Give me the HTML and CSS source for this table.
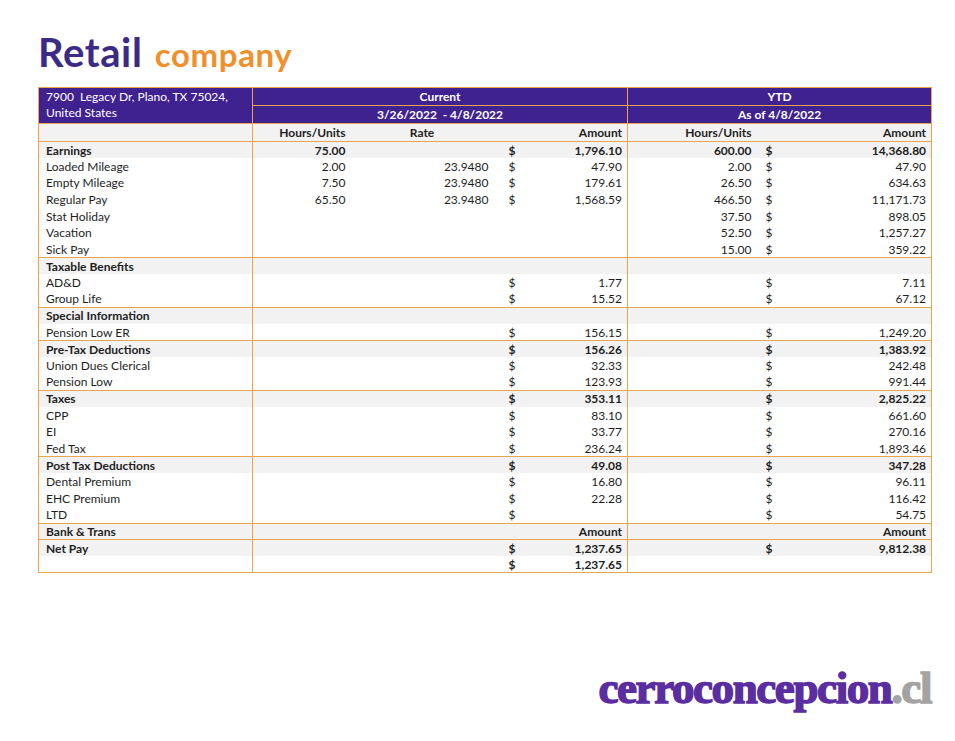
FILE: index.html
```html
<!DOCTYPE html>
<html lang="en">
<head>
<meta charset="utf-8">
<title>Retail company – Pay statement</title>
<link rel="stylesheet" href="styles.css">
</head>
<body>
<div class="page">
  <h1 class="brand"><span class="brand-main">Retail</span> <span class="brand-sub">company</span></h1>

  <table class="pay">
    <colgroup>
      <col class="w-label"><col class="w-chours"><col class="w-rate"><col class="w-cdol"><col class="w-camt">
      <col class="w-yhours"><col class="w-ydol"><col class="w-yamt">
    </colgroup>
    <tr class="top">
      <td rowspan="2" class="addr">7900&nbsp; Legacy Dr, Plano, TX 75024,<br>United States</td>
      <td colspan="4" class="grp hd">Current</td>
      <td colspan="3" class="grp hd">YTD</td>
    </tr>
    <tr class="top top2">
      <td colspan="4" class="grp hd">3/26/2022&nbsp; - 4/8/2022</td>
      <td colspan="3" class="grp hd">As of 4/8/2022</td>
    </tr>
    <tr class="colhead sec">
      <td></td>
      <td class="grp num">Hours/Units</td>
      <td class="ctr">Rate</td>
      <td></td>
      <td class="num">Amount</td>
      <td class="grp num">Hours/Units</td>
      <td></td>
      <td class="num">Amount</td>
    </tr>

    <tr class="sec"><td class="lbl">Earnings</td><td class="grp num">75.00</td><td></td><td class="dol">$</td><td class="num">1,796.10</td><td class="grp num">600.00</td><td class="dol ydol">$</td><td class="num">14,368.80</td></tr>
    <tr><td class="lbl">Loaded Mileage</td><td class="grp num">2.00</td><td class="num">23.9480</td><td class="dol">$</td><td class="num">47.90</td><td class="grp num">2.00</td><td class="dol ydol">$</td><td class="num">47.90</td></tr>
    <tr><td class="lbl">Empty Mileage</td><td class="grp num">7.50</td><td class="num">23.9480</td><td class="dol">$</td><td class="num">179.61</td><td class="grp num">26.50</td><td class="dol ydol">$</td><td class="num">634.63</td></tr>
    <tr><td class="lbl">Regular Pay</td><td class="grp num">65.50</td><td class="num">23.9480</td><td class="dol">$</td><td class="num">1,568.59</td><td class="grp num">466.50</td><td class="dol ydol">$</td><td class="num">11,171.73</td></tr>
    <tr><td class="lbl">Stat Holiday</td><td class="grp"></td><td></td><td></td><td></td><td class="grp num">37.50</td><td class="dol ydol">$</td><td class="num">898.05</td></tr>
    <tr><td class="lbl">Vacation</td><td class="grp"></td><td></td><td></td><td></td><td class="grp num">52.50</td><td class="dol ydol">$</td><td class="num">1,257.27</td></tr>
    <tr><td class="lbl">Sick Pay</td><td class="grp"></td><td></td><td></td><td></td><td class="grp num">15.00</td><td class="dol ydol">$</td><td class="num">359.22</td></tr>

    <tr class="sec"><td class="lbl">Taxable Benefits</td><td class="grp"></td><td></td><td></td><td></td><td class="grp"></td><td></td><td></td></tr>
    <tr><td class="lbl">AD&amp;D</td><td class="grp"></td><td></td><td class="dol">$</td><td class="num">1.77</td><td class="grp"></td><td class="dol ydol">$</td><td class="num">7.11</td></tr>
    <tr><td class="lbl">Group Life</td><td class="grp"></td><td></td><td class="dol">$</td><td class="num">15.52</td><td class="grp"></td><td class="dol ydol">$</td><td class="num">67.12</td></tr>

    <tr class="sec"><td class="lbl">Special Information</td><td class="grp"></td><td></td><td></td><td></td><td class="grp"></td><td></td><td></td></tr>
    <tr><td class="lbl">Pension Low ER</td><td class="grp"></td><td></td><td class="dol">$</td><td class="num">156.15</td><td class="grp"></td><td class="dol ydol">$</td><td class="num">1,249.20</td></tr>

    <tr class="sec"><td class="lbl">Pre-Tax Deductions</td><td class="grp"></td><td></td><td class="dol">$</td><td class="num">156.26</td><td class="grp"></td><td class="dol ydol">$</td><td class="num">1,383.92</td></tr>
    <tr><td class="lbl">Union Dues Clerical</td><td class="grp"></td><td></td><td class="dol">$</td><td class="num">32.33</td><td class="grp"></td><td class="dol ydol">$</td><td class="num">242.48</td></tr>
    <tr><td class="lbl">Pension Low</td><td class="grp"></td><td></td><td class="dol">$</td><td class="num">123.93</td><td class="grp"></td><td class="dol ydol">$</td><td class="num">991.44</td></tr>

    <tr class="sec"><td class="lbl">Taxes</td><td class="grp"></td><td></td><td class="dol">$</td><td class="num">353.11</td><td class="grp"></td><td class="dol ydol">$</td><td class="num">2,825.22</td></tr>
    <tr><td class="lbl">CPP</td><td class="grp"></td><td></td><td class="dol">$</td><td class="num">83.10</td><td class="grp"></td><td class="dol ydol">$</td><td class="num">661.60</td></tr>
    <tr><td class="lbl">EI</td><td class="grp"></td><td></td><td class="dol">$</td><td class="num">33.77</td><td class="grp"></td><td class="dol ydol">$</td><td class="num">270.16</td></tr>
    <tr><td class="lbl">Fed Tax</td><td class="grp"></td><td></td><td class="dol">$</td><td class="num">236.24</td><td class="grp"></td><td class="dol ydol">$</td><td class="num">1,893.46</td></tr>

    <tr class="sec"><td class="lbl">Post Tax Deductions</td><td class="grp"></td><td></td><td class="dol">$</td><td class="num">49.08</td><td class="grp"></td><td class="dol ydol">$</td><td class="num">347.28</td></tr>
    <tr><td class="lbl">Dental Premium</td><td class="grp"></td><td></td><td class="dol">$</td><td class="num">16.80</td><td class="grp"></td><td class="dol ydol">$</td><td class="num">96.11</td></tr>
    <tr><td class="lbl">EHC Premium</td><td class="grp"></td><td></td><td class="dol">$</td><td class="num">22.28</td><td class="grp"></td><td class="dol ydol">$</td><td class="num">116.42</td></tr>
    <tr><td class="lbl">LTD</td><td class="grp"></td><td></td><td class="dol">$</td><td class="num"></td><td class="grp"></td><td class="dol ydol">$</td><td class="num">54.75</td></tr>

    <tr class="sec"><td class="lbl">Bank &amp; Trans</td><td class="grp"></td><td></td><td></td><td class="num">Amount</td><td class="grp"></td><td></td><td class="num">Amount</td></tr>
    <tr class="sec"><td class="lbl">Net Pay</td><td class="grp"></td><td></td><td class="dol">$</td><td class="num">1,237.65</td><td class="grp"></td><td class="dol ydol">$</td><td class="num">9,812.38</td></tr>
    <tr class="strong"><td class="lbl"></td><td class="grp"></td><td></td><td class="dol">$</td><td class="num">1,237.65</td><td class="grp"></td><td></td><td></td></tr>
  </table>

  <footer class="logo"><span class="logo-main">cerroconcepcion</span><span class="logo-tld">.cl</span></footer>
</div>
</body>
</html>
```

FILE: styles.css
```css
* { box-sizing: border-box; }

html, body {
  margin: 0;
  padding: 0;
  background: #ffffff;
}

.page {
  width: 955px;
  height: 741px;
  padding: 24px 24px 0 38px;
  display: flex;
  flex-direction: column;
  font-family: Lato, "Open Sans", sans-serif;
  color: #1e1e1e;
}

.brand {
  margin: 0;
  height: 63px;
  font-family: Lato, "Open Sans", sans-serif;
  font-weight: 700;
  line-height: 56px;
  letter-spacing: 0.6px;
}

.brand-main {
  color: #3b2a86;
  font-size: 40px;
}

.brand-sub {
  color: #f0902c;
  font-size: 33px;
  margin-left: 4px;
}

.pay {
  width: 893px;
  border-collapse: collapse;
  table-layout: fixed;
  border: 1px solid #e9a54e;
  font-size: 12px;
}

.w-label { width: 214px; }
.w-chours { width: 98px; }
.w-rate { width: 143px; }
.w-cdol { width: 30px; }
.w-camt { width: 104px; }
.w-yhours { width: 129px; }
.w-ydol { width: 30px; }
.w-yamt { width: 145px; }

.pay td {
  height: 16.6px;
  padding: 0 5px 0 0;
  line-height: 15px;
  white-space: nowrap;
  overflow: hidden;
  vertical-align: middle;
}

.pay tr.top td {
  height: 18px;
  background: #3f2190;
  color: #ffffff;
}

.pay tr.top2 td { border-top: 1px solid #e9a54e; }

.pay td.addr {
  vertical-align: top;
  padding: 1px 0 0 7px;
  font-weight: 400;
  line-height: 16px;
}

.pay td.hd {
  text-align: center;
  font-weight: 700;
  padding: 0;
}

.pay tr.colhead td {
  height: 18px;
  font-weight: 700;
}

.pay td.grp { border-left: 1px solid #e9a54e; }

.pay tr.sec td {
  background: #f2f2f2;
  font-weight: 700;
  border-top: 1px solid #e9a54e;
}

.pay tr.strong td { font-weight: 700; }

.pay td.lbl { padding-left: 7px; }

.pay td.num { text-align: right; }

.pay td.ctr { text-align: center; padding: 0; }

.pay td.dol { padding-left: 15px; }

.pay td.ydol { padding-left: 9px; }

.logo {
  margin-top: auto;
  margin-bottom: 28px;
  align-self: flex-end;
  margin-right: 0;
  font-family: "Liberation Serif", "DejaVu Serif", serif;
  font-weight: 700;
  font-size: 45px;
  line-height: 50px;
  letter-spacing: -1.4px;
  -webkit-text-stroke: 1.5px currentColor;
}

.logo-main { color: #5a2ea0; }

.logo-tld { color: #a3a3a3; }
```
